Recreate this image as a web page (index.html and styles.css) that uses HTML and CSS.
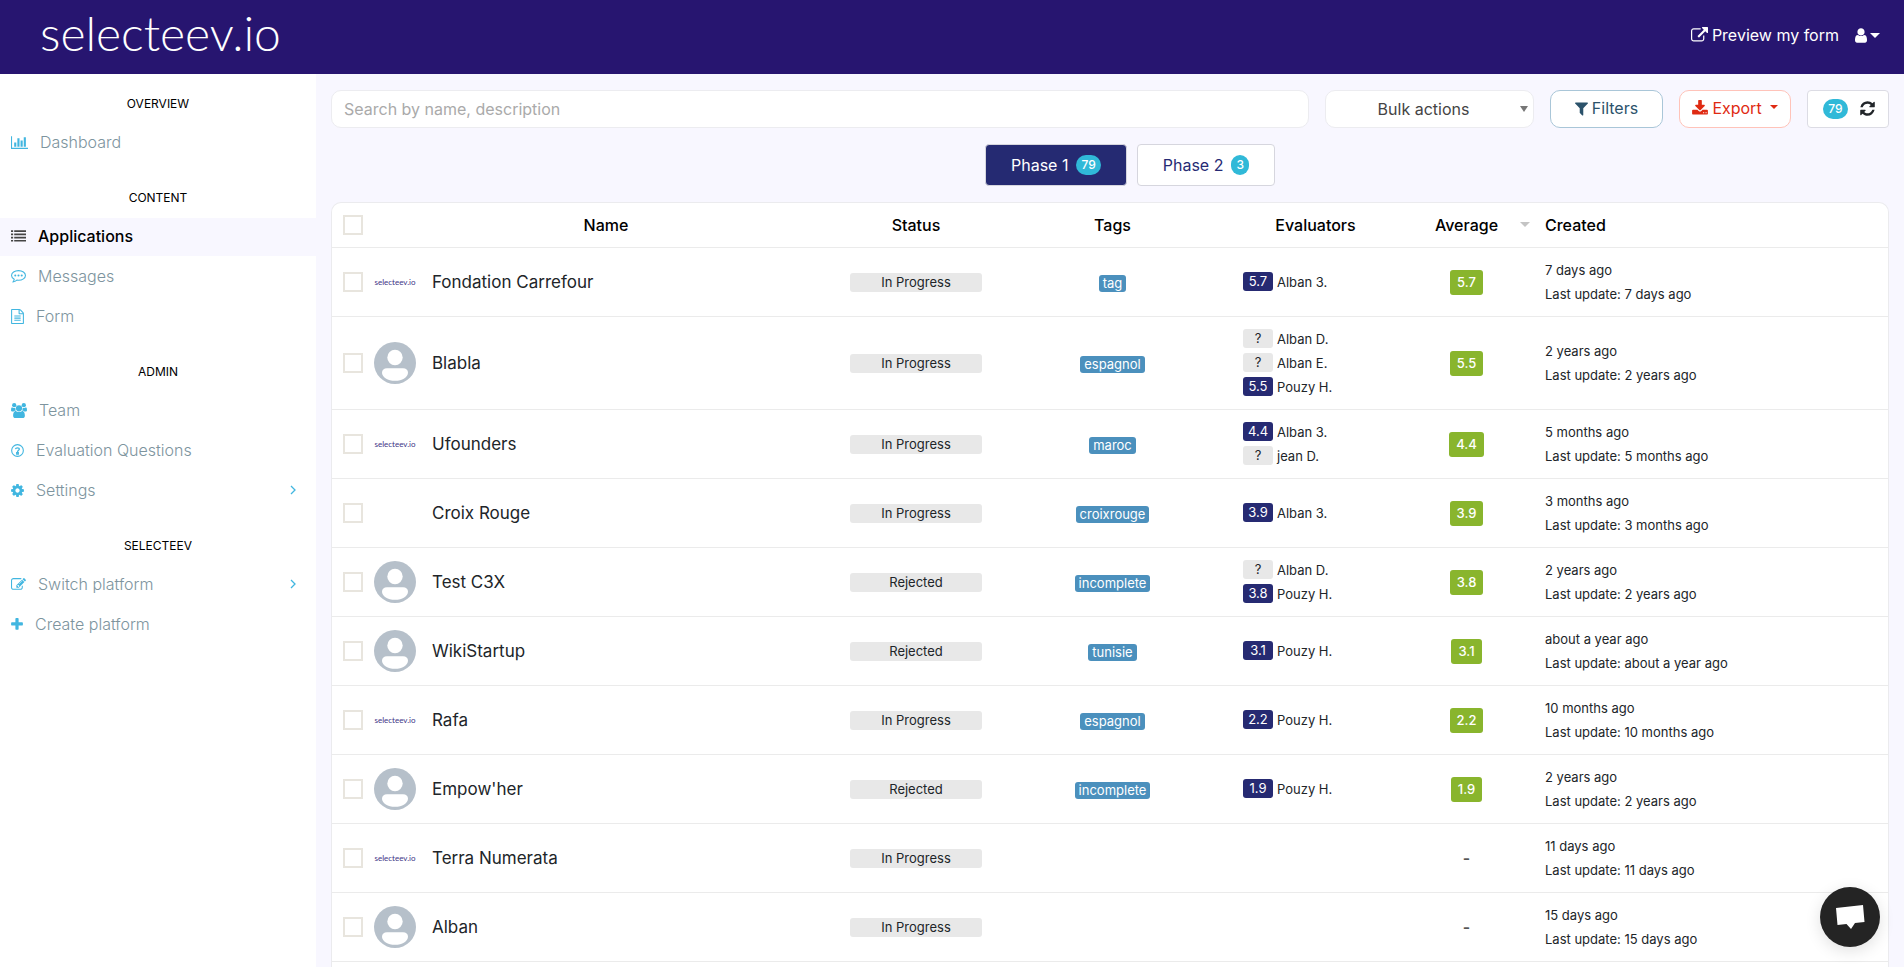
FILE: index.html
```html
<!DOCTYPE html>
<html lang="en">
<head>
<meta charset="utf-8">
<title>Applications - selecteev.io</title>
<link rel="stylesheet" href="styles.css">
</head>
<body>
<svg class="sprite" aria-hidden="true">
  <symbol id="avatar" viewBox="0 0 42 42"><circle cx="21" cy="21" r="21" fill="#b6c0ca"/><circle cx="21" cy="15.500" r="7.700" fill="#fff"/><path d="M13 26.200h16c3 0 5 1.600 5 4.300 0 4.800-5.800 8.300-13 8.300S8 35.300 8 30.500c0-2.700 2-4.300 5-4.300z" fill="#fff"/></symbol>
  <symbol id="angle" viewBox="0 0 6 10"><path d="M1 1l4 4-4 4" fill="none" stroke="currentColor" stroke-width="1.300"/></symbol>
</svg>
<header class="topbar">
  <a class="logo" href="#">selecteev.io</a>
  <nav class="topnav">
    <a class="preview" href="#"><svg class="ico" width="17" height="17" viewBox="0 0 1792 1792"><path d="M1408 928v320q0 119-84.500 203.500t-203.500 84.500h-832q-119 0-203.500-84.500t-84.500-203.500v-832q0-119 84.500-203.500t203.500-84.500h704q14 0 23 9t9 23v64q0 14-9 23t-23 9h-704q-66 0-113 47t-47 113v832q0 66 47 113t113 47h832q66 0 113-47t47-113v-320q0-14 9-23t23-9h64q14 0 23 9t9 23zm384-864v512q0 26-19 45t-45 19-45-19l-176-176-652 652q-10 10-23 10t-23-10l-114-114q-10-10-10-23t10-23l652-652-176-176q-19-19-19-45t19-45 45-19h512q26 0 45 19t19 45z"/></svg>Preview my form</a>
    <button class="account" type="button" aria-label="Account"><svg class="ico" width="12" height="17" viewBox="256 0 1280 1792"><path d="M1536 1399q0 109-62.500 187t-150.500 78h-854q-88 0-150.500-78t-62.500-187q0-85 8.500-160.500t31.500-152 58.500-131 94-89 134.500-34.500q131 128 313 128t313-128q76 0 134.500 34.500t94 89 58.500 131 31.500 152 8.500 160.500zm-256-887q0 159-112.500 271.500t-271.500 112.500-271.500-112.500-112.500-271.500 112.500-271.500 271.500-112.500 271.500 112.500 112.500 271.500z"/></svg><span class="caret"></span></button>
  </nav>
</header>
<div class="shell">
  <nav class="sidebar">
    <h2>OVERVIEW</h2>
    <a href="#"><svg class="ico" width="17" height="15" viewBox="0 0 2048 1792"><path d="M640 896v512h-256v-512h256zm384-512v1024h-256v-1024h256zm1024 1152v128h-2048v-1536h128v1408h1920zm-640-896v768h-256v-768h256zm384-384v1152h-256v-1152h256z"/></svg>Dashboard</a>
    <h2>CONTENT</h2>
    <a class="active" href="#"><svg class="ico" width="15" height="15" viewBox="0 0 1792 1792"><path d="M0 160h256v192H0zM384 160h1408v192H384zM0 544h256v192H0zM384 544h1408v192H384zM0 928h256v192H0zM384 928h1408v192H384zM0 1312h256v192H0zM384 1312h1408v192H384z"/></svg>Applications</a>
    <a href="#"><svg class="ico" width="15" height="15" viewBox="0 0 1792 1792"><path d="M896 190c-460 0-832 256-832 578 0 190 125 350 325 455-10 110-60 220-165 330 190-25 350-110 470-225 65 10 130 16 202 16 460 0 832-256 832-576S1356 190 896 190z" fill="none" stroke="currentColor" stroke-width="128" stroke-linejoin="round"/><circle cx="512" cy="768" r="125"/><circle cx="896" cy="768" r="125"/><circle cx="1280" cy="768" r="125"/></svg>Messages</a>
    <a href="#"><svg class="ico" width="13" height="15" viewBox="0 0 1536 1792"><path d="M1468 380q28 28 48 76t20 88v1152q0 40-28 68t-68 28h-1344q-40 0-68-28t-28-68v-1600q0-40 28-68t68-28h896q40 0 88 20t76 48zm-444-244v376h376q-10-29-22-41l-313-313q-12-12-41-22zm384 1528v-1024h-416q-40 0-68-28t-28-68v-416h-768v1536h1280zm-1024-864q0-14 9-23t23-9h704q14 0 23 9t9 23v64q0 14-9 23t-23 9h-704q-14 0-23-9t-9-23v-64zm736 224q14 0 23 9t9 23v64q0 14-9 23t-23 9h-704q-14 0-23-9t-9-23v-64q0-14 9-23t23-9h704zm0 256q14 0 23 9t9 23v64q0 14-9 23t-23 9h-704q-14 0-23-9t-9-23v-64q0-14 9-23t23-9h704z"/></svg>Form</a>
    <h2>ADMIN</h2>
    <a href="#"><svg class="ico" width="16" height="15" viewBox="0 0 1920 1792"><circle cx="384" cy="256" r="256"/><circle cx="1536" cy="256" r="256"/><circle cx="960" cy="640" r="375"/><path d="M593 896q-162 5-265 128H194q-82 0-138-40T0 865q0-353 124-353 6 0 43 21t97 43 119 21q67 0 133-23-5 37-5 66 0 139 82 256zM1327 896q162 5 265 128h134q82 0 138-40t56-119q0-353-124-353-6 0-43 21t-97 43-119 21q-67 0-133-23 5 37 5 66 0 139-82 256z"/><path d="M1664 1533q0 120-73 190t-194 69H523q-121 0-194-69t-73-190c0-270 80-573 321-573 30 0 160 128 383 128s353-128 383-128c241 0 321 303 321 573z"/></svg>Team</a>
    <a href="#"><svg class="ico" width="13" height="15" viewBox="0 0 1536 1792"><circle cx="768" cy="896" r="700" fill="none" stroke="currentColor" stroke-width="130"/><path d="M672 1150h192v180H672zM520 740c20-110 120-170 240-170 140 0 235 65 235 160 0 140-227 150-227 350" fill="none" stroke="currentColor" stroke-width="150"/></svg>Evaluation Questions</a>
    <a href="#"><svg class="ico" width="13" height="15" viewBox="128 0 1536 1792"><path d="M1152 896q0-106-75-181t-181-75-181 75-75 181 75 181 181 75 181-75 75-181zm512-109v222q0 12-8 23t-20 13l-185 28q-19 54-39 91 35 50 107 138 10 12 10 25t-9 23q-27 37-99 108t-94 71q-12 0-26-9l-138-108q-44 23-91 38-16 136-29 186-7 28-36 28h-222q-14 0-24.500-8.500t-11.500-21.500l-28-184q-49-16-90-37l-141 107q-10 9-25 9-14 0-25-11-126-114-165-168-7-10-7-23 0-12 8-23 15-21 51-66.500t54-70.500q-27-50-41-99l-183-27q-13-2-21-12.500t-8-23.500v-222q0-12 8-23t19-13l186-28q14-46 39-92-40-57-107-138-10-12-10-24 0-10 9-23 26-36 98.500-107.500t94.500-71.500q13 0 26 10l138 107q44-23 91-38 16-136 29-186 7-28 36-28h222q14 0 24.500 8.500t11.500 21.500l28 184q49 16 90 37l142-107q9-9 24-9 13 0 25 10 129 119 165 170 7 8 7 22 0 12-8 23-15 21-51 66.500t-54 70.500q26 50 41 98l183 28q13 2 21 12.500t8 23.500z"/></svg>Settings<svg class="angle" width="6" height="10"><use href="#angle"/></svg></a>
    <h2>SELECTEEV</h2>
    <a href="#"><svg class="ico" width="15" height="15" viewBox="0 0 1792 1792"><path d="M888 1184l116-116-152-152-116 116v56h96v96h56zm440-720q-16-16-33 1l-350 350q-17 17-1 33t33-1l350-350q17-17 1-33zm80 594v190q0 119-84.500 203.500t-203.500 84.500h-832q-119 0-203.500-84.500t-84.500-203.500v-832q0-119 84.500-203.500t203.500-84.500h832q63 0 117 25 15 7 18 23 3 17-9 29l-49 49q-14 14-32 8-23-6-45-6h-832q-66 0-113 47t-47 113v832q0 66 47 113t113 47h832q66 0 113-47t47-113v-126q0-13 9-22l64-64q15-15 35-7t20 29zm-96-738l288 288-672 672h-288v-288zm444 132l-92 92-288-288 92-92q28-28 68-28t68 28l152 152q28 28 28 68t-28 68z"/></svg>Switch platform<svg class="angle" width="6" height="10"><use href="#angle"/></svg></a>
    <a href="#"><svg class="ico" width="12" height="15" viewBox="192 0 1408 1792"><path d="M1600 736v192q0 40-28 68t-68 28h-416v416q0 40-28 68t-68 28h-192q-40 0-68-28t-28-68v-416h-416q-40 0-68-28t-28-68v-192q0-40 28-68t68-28h416v-416q0-40 28-68t68-28h192q40 0 68 28t28 68v416h416q40 0 68 28t28 68z"/></svg>Create platform</a>
  </nav>
  <main class="content">
    <div class="toolbar">
      <input class="search" type="text" placeholder="Search by name, description" aria-label="Search by name, description">
      <div class="bulk"><select aria-label="Bulk actions"><option>Bulk actions</option></select><span class="caret"></span></div>
      <button class="btn filters" type="button"><svg class="ico" width="13" height="17" viewBox="192 0 1408 1792"><path d="M1595 295q17 41-14 70l-493 493v742q0 42-39 59-13 5-25 5-27 0-45-19l-256-256q-19-19-19-45v-486l-493-493q-31-29-14-70 17-39 59-39h1280q42 0 59 39z"/></svg>Filters</button>
      <button class="btn export" type="button"><svg class="ico" width="16" height="17" viewBox="64 0 1664 1792"><path d="M1344 1344q0-26-19-45t-45-19-45 19-19 45 19 45 45 19 45-19 19-45zm256 0q0-26-19-45t-45-19-45 19-19 45 19 45 45 19 45-19 19-45zm128-224v320q0 40-28 68t-68 28h-1472q-40 0-68-28t-28-68v-320q0-40 28-68t68-28h465l135 136q58 56 136 56t136-56l136-136h464q40 0 68 28t28 68zm-325-569q17 41-14 70l-448 448q-18 19-45 19t-45-19l-448-448q-31-29-14-70 17-39 59-39h256v-448q0-26 19-45t45-19h256q26 0 45 19t19 45v448h256q42 0 59 39z"/></svg>Export<span class="caret"></span></button>
      <button class="btn refresh" type="button" aria-label="Refresh, 79 applications"><span class="pill">79</span><svg class="ico" width="15" height="17" viewBox="128 0 1536 1792"><path d="M1639 1056q0 5-1 7-64 268-268 434.500t-478 166.500q-146 0-282.500-55t-243.500-157l-129 129q-19 19-45 19t-45-19-19-45v-448q0-26 19-45t45-19h448q26 0 45 19t19 45-19 45l-137 137q71 66 161 102t187 36q134 0 250-65t186-179q11-17 53-117 8-23 30-23h192q13 0 22.500 9.500t9.500 22.500zm25-800v448q0 26-19 45t-45 19h-448q-26 0-45-19t-19-45 19-45l138-138q-148-137-349-137-134 0-250 65t-186 179q-11 17-53 117-8 23-30 23h-199q-13 0-22.500-9.500t-9.500-22.500v-7q65-268 270-434.500t480-166.500q146 0 284 55.500t245 156.500l130-129q19-19 45-19t45 19 19 45z"/></svg></button>
    </div>
    <div class="phases">
      <button class="phase current" type="button">Phase 1<span class="pill">79</span></button>
      <button class="phase" type="button">Phase 2<span class="pill">3</span></button>
    </div>
    <div class="card">
      <table>
        <colgroup><col class="c-check"><col><col class="c-status"><col class="c-tags"><col class="c-eval"><col class="c-avg"><col class="c-created"></colgroup>
        <thead>
          <tr><th><input type="checkbox" aria-label="Select all"></th><th>Name</th><th>Status</th><th>Tags</th><th>Evaluators</th><th><div class="sortable">Average<span class="caret"></span></div></th><th class="created">Created</th></tr>
        </thead>
        <tbody>
          <tr><td><input type="checkbox" aria-label="Select Fondation Carrefour"></td><td><div class="who"><span class="thumb">selecteev.io</span>Fondation Carrefour</div></td><td><span class="status">In Progress</span></td><td><span class="tag">tag</span></td><td><div class="ev"><b>5.7</b>Alban 3.</div></td><td><span class="avg">5.7</span></td><td class="created"><div>7 days ago</div><div>Last update: 7 days ago</div></td></tr>
          <tr><td><input type="checkbox" aria-label="Select Blabla"></td><td><div class="who"><svg class="thumb"><use href="#avatar"/></svg>Blabla</div></td><td><span class="status">In Progress</span></td><td><span class="tag">espagnol</span></td><td><div class="ev"><i>?</i>Alban D.</div><div class="ev"><i>?</i>Alban E.</div><div class="ev"><b>5.5</b>Pouzy H.</div></td><td><span class="avg">5.5</span></td><td class="created"><div>2 years ago</div><div>Last update: 2 years ago</div></td></tr>
          <tr><td><input type="checkbox" aria-label="Select Ufounders"></td><td><div class="who"><span class="thumb">selecteev.io</span>Ufounders</div></td><td><span class="status">In Progress</span></td><td><span class="tag">maroc</span></td><td><div class="ev"><b>4.4</b>Alban 3.</div><div class="ev"><i>?</i>jean D.</div></td><td><span class="avg">4.4</span></td><td class="created"><div>5 months ago</div><div>Last update: 5 months ago</div></td></tr>
          <tr><td><input type="checkbox" aria-label="Select Croix Rouge"></td><td><div class="who"><span class="thumb"></span>Croix Rouge</div></td><td><span class="status">In Progress</span></td><td><span class="tag">croixrouge</span></td><td><div class="ev"><b>3.9</b>Alban 3.</div></td><td><span class="avg">3.9</span></td><td class="created"><div>3 months ago</div><div>Last update: 3 months ago</div></td></tr>
          <tr><td><input type="checkbox" aria-label="Select Test C3X"></td><td><div class="who"><svg class="thumb"><use href="#avatar"/></svg>Test C3X</div></td><td><span class="status">Rejected</span></td><td><span class="tag">incomplete</span></td><td><div class="ev"><i>?</i>Alban D.</div><div class="ev"><b>3.8</b>Pouzy H.</div></td><td><span class="avg">3.8</span></td><td class="created"><div>2 years ago</div><div>Last update: 2 years ago</div></td></tr>
          <tr><td><input type="checkbox" aria-label="Select WikiStartup"></td><td><div class="who"><svg class="thumb"><use href="#avatar"/></svg>WikiStartup</div></td><td><span class="status">Rejected</span></td><td><span class="tag">tunisie</span></td><td><div class="ev"><b>3.1</b>Pouzy H.</div></td><td><span class="avg">3.1</span></td><td class="created"><div>about a year ago</div><div>Last update: about a year ago</div></td></tr>
          <tr><td><input type="checkbox" aria-label="Select Rafa"></td><td><div class="who"><span class="thumb">selecteev.io</span>Rafa</div></td><td><span class="status">In Progress</span></td><td><span class="tag">espagnol</span></td><td><div class="ev"><b>2.2</b>Pouzy H.</div></td><td><span class="avg">2.2</span></td><td class="created"><div>10 months ago</div><div>Last update: 10 months ago</div></td></tr>
          <tr><td><input type="checkbox" aria-label="Select Empow'her"></td><td><div class="who"><svg class="thumb"><use href="#avatar"/></svg>Empow'her</div></td><td><span class="status">Rejected</span></td><td><span class="tag">incomplete</span></td><td><div class="ev"><b>1.9</b>Pouzy H.</div></td><td><span class="avg">1.9</span></td><td class="created"><div>2 years ago</div><div>Last update: 2 years ago</div></td></tr>
          <tr><td><input type="checkbox" aria-label="Select Terra Numerata"></td><td><div class="who"><span class="thumb">selecteev.io</span>Terra Numerata</div></td><td><span class="status">In Progress</span></td><td></td><td></td><td class="none">-</td><td class="created"><div>11 days ago</div><div>Last update: 11 days ago</div></td></tr>
          <tr><td><input type="checkbox" aria-label="Select Alban"></td><td><div class="who"><svg class="thumb"><use href="#avatar"/></svg>Alban</div></td><td><span class="status">In Progress</span></td><td></td><td></td><td class="none">-</td><td class="created"><div>15 days ago</div><div>Last update: 15 days ago</div></td></tr>
        </tbody>
      </table>
    </div>
  </main>
</div>
<button class="chat" type="button" aria-label="Open chat"><svg width="30" height="26" viewBox="0 0 30 26"><path d="M1 4L28 1l1.500 17-9.500 1-4 6-4.500-5L2.500 21z" fill="#fff"/></svg></button>
</body>
</html>
```
FILE: styles.css
```css
* { box-sizing: border-box; }
body {
  margin: 0;
  height: 100vh;
  overflow: hidden;
  display: flex;
  flex-direction: column;
  background: #f8f7ff;
  color: #212529;
  font: 16px/24px Inter, "Open Sans", sans-serif;
}
a { color: inherit; text-decoration: none; }
button, input, select { font: inherit; color: inherit; margin: 0; }
button { cursor: pointer; }
.sprite { position: absolute; width: 0; height: 0; }
.ico { flex: none; fill: currentColor; }
.caret {
  flex: none;
  border: 5px solid transparent;
  border-top-color: currentColor;
  border-bottom: 0;
}

.topbar {
  flex: none;
  height: 74px;
  padding: 0 24px 4px 40px;
  display: flex;
  align-items: center;
  justify-content: space-between;
  background: #271570;
  color: #fff;
}
.logo { font: 300 48px/60px Lato, sans-serif; padding-bottom: 4px; }
.topnav { display: flex; align-items: center; gap: 16px; }
.preview { display: flex; align-items: center; gap: 4px; }
.account {
  display: flex;
  align-items: center;
  gap: 3px;
  padding: 0;
  border: 0;
  background: none;
}

.shell { flex: 1; min-height: 0; display: flex; }
.sidebar { flex: none; width: 316px; background: #fff; }
.sidebar h2 {
  margin: 0;
  padding: 26px 0 11px;
  color: #000;
  font-size: 12px;
  font-weight: 400;
  line-height: 19px;
  text-align: center;
}
.sidebar h2:first-child { padding-top: 20px; }
.sidebar a {
  display: flex;
  align-items: center;
  gap: 12px;
  height: 38px;
  margin-bottom: 2px;
  padding: 0 20px 2px 11px;
  color: #7d949e;
  font-weight: 300;
}
.sidebar a + h2 { margin-top: -2px; }
.sidebar .ico, .angle { color: #41b6e0; }
.angle { margin-left: auto; }
.sidebar .active { background: #f8f7ff; color: #000; font-weight: 500; }
.sidebar .active .ico { color: #444; }

.content {
  flex: 1;
  min-width: 0;
  display: flex;
  flex-direction: column;
  padding: 16px 15px 0;
}
.toolbar { display: flex; gap: 16px; }
.search, .bulk, .btn {
  height: 38px;
  border: 1px solid #ececf0;
  border-radius: 10px;
  background: #fff;
}
.search { flex: 1; min-width: 0; padding: 0 12px; }
.search::placeholder { color: #aaa; opacity: 1; }
.bulk { width: 209px; display: grid; align-items: center; }
.bulk > * { grid-area: 1 / 1; }
.bulk select {
  appearance: none;
  width: 100%;
  height: 36px;
  padding: 0 12px 0 0;
  border: 0;
  border-radius: 10px;
  background: none;
  color: #444;
  text-align-last: center;
}
.bulk .caret { justify-self: end; margin-right: 5px; color: #777; border-width: 6px 4px 0; }
.btn { display: flex; align-items: center; justify-content: center; gap: 4px; padding: 0 0 2px; }
.filters { width: 113px; border-color: #a9c6d8; color: #2b526b; }
.export { width: 112px; border-color: #ffc3b9; color: #df2a12; }
.export .caret { margin: 0 0 2px 4px; border-width: 4px 4px 0; }
.refresh { width: 82px; gap: 12px; padding-left: 2px; border-color: #dcdce4; border-radius: 4px; }
.pill {
  padding: 0 5px;
  border-radius: 10px;
  background: #30b9d8;
  color: #fff;
  font-size: 12px;
  font-weight: 500;
  line-height: 20px;
}
.refresh .pill { margin-top: 2px; }

.phases { display: flex; justify-content: center; gap: 10px; padding: 16px 0 16px 40px; }
.phase {
  display: flex;
  align-items: center;
  gap: 8px;
  height: 42px;
  padding: 0 25px;
  border: 1px solid #d6d6de;
  border-radius: 4px;
  background: #fff;
  color: #262a74;
}
.phase.current { background: #252a72; color: #fff; }

.card {
  flex: 1;
  min-height: 0;
  overflow: hidden;
  border: 1px solid #ebebee;
  border-bottom: 0;
  border-radius: 10px 10px 0 0;
  background: #fff;
}
table { width: 100%; table-layout: fixed; border-collapse: collapse; }
.c-check { width: 42px; }
.c-status { width: 156px; }
.c-tags { width: 237px; }
.c-eval { width: 169px; }
.c-avg { width: 133px; }
.c-created { width: 355px; }
th, td { border-bottom: 1px solid #ebebeb; text-align: center; vertical-align: middle; }
th { height: 44px; padding: 0; color: #000; font-weight: 500; }
td { height: 69px; padding: 10px 0; }
th:first-child, td:first-child { padding-left: 11px; text-align: left; }
input[type="checkbox"] {
  appearance: none;
  display: block;
  width: 20px;
  height: 20px;
  border: 2px solid #e8e5de;
  background: #fff;
}
.sortable { display: grid; grid-template-columns: 1fr auto 1fr; align-items: center; }
.sortable::before { content: ""; }
.sortable .caret { justify-self: end; margin-right: 3px; color: #c4c4c4; }
.who { display: flex; align-items: center; gap: 16px; font-size: 17px; text-align: left; }
.thumb {
  flex: none;
  width: 42px;
  height: 42px;
  color: #3b3285;
  font: 400 8px/42px Lato, sans-serif;
  text-align: center;
}
.status {
  display: block;
  margin: 2px 12px 0;
  border-radius: 3px;
  background: #e8e8e8;
  font-size: 13px;
  line-height: 19px;
}
.tag {
  display: inline-block;
  padding: 0 4px;
  border-radius: 3px;
  background: #4b90bd;
  color: #fff;
  font-size: 13px;
  line-height: 17px;
  vertical-align: middle;
}
.ev { display: flex; align-items: center; gap: 4px; height: 24px; padding-left: 12px; font-size: 13px; }
.ev b, .ev i {
  width: 30px;
  border-radius: 3px;
  background: #e8e8e8;
  font-style: normal;
  font-weight: 400;
  line-height: 19px;
}
.ev b { background: #262a72; color: #fff; }
.avg {
  display: inline-block;
  padding: 0 7px;
  border-radius: 3px;
  background: #89b52d;
  color: #fff;
  font-size: 13px;
  font-weight: 500;
  line-height: 25px;
  vertical-align: middle;
}
.none { color: #555; font-weight: 600; }
th.created, td.created { padding-left: 12px; text-align: left; }
td.created { font-size: 13px; }

.chat {
  position: fixed;
  right: 24px;
  bottom: 20px;
  width: 60px;
  height: 60px;
  display: flex;
  align-items: center;
  justify-content: center;
  padding: 0;
  border: 0;
  border-radius: 50%;
  background: #242424;
  box-shadow: 0 4px 16px rgba(0, 0, 0, 0.12);
}
```
